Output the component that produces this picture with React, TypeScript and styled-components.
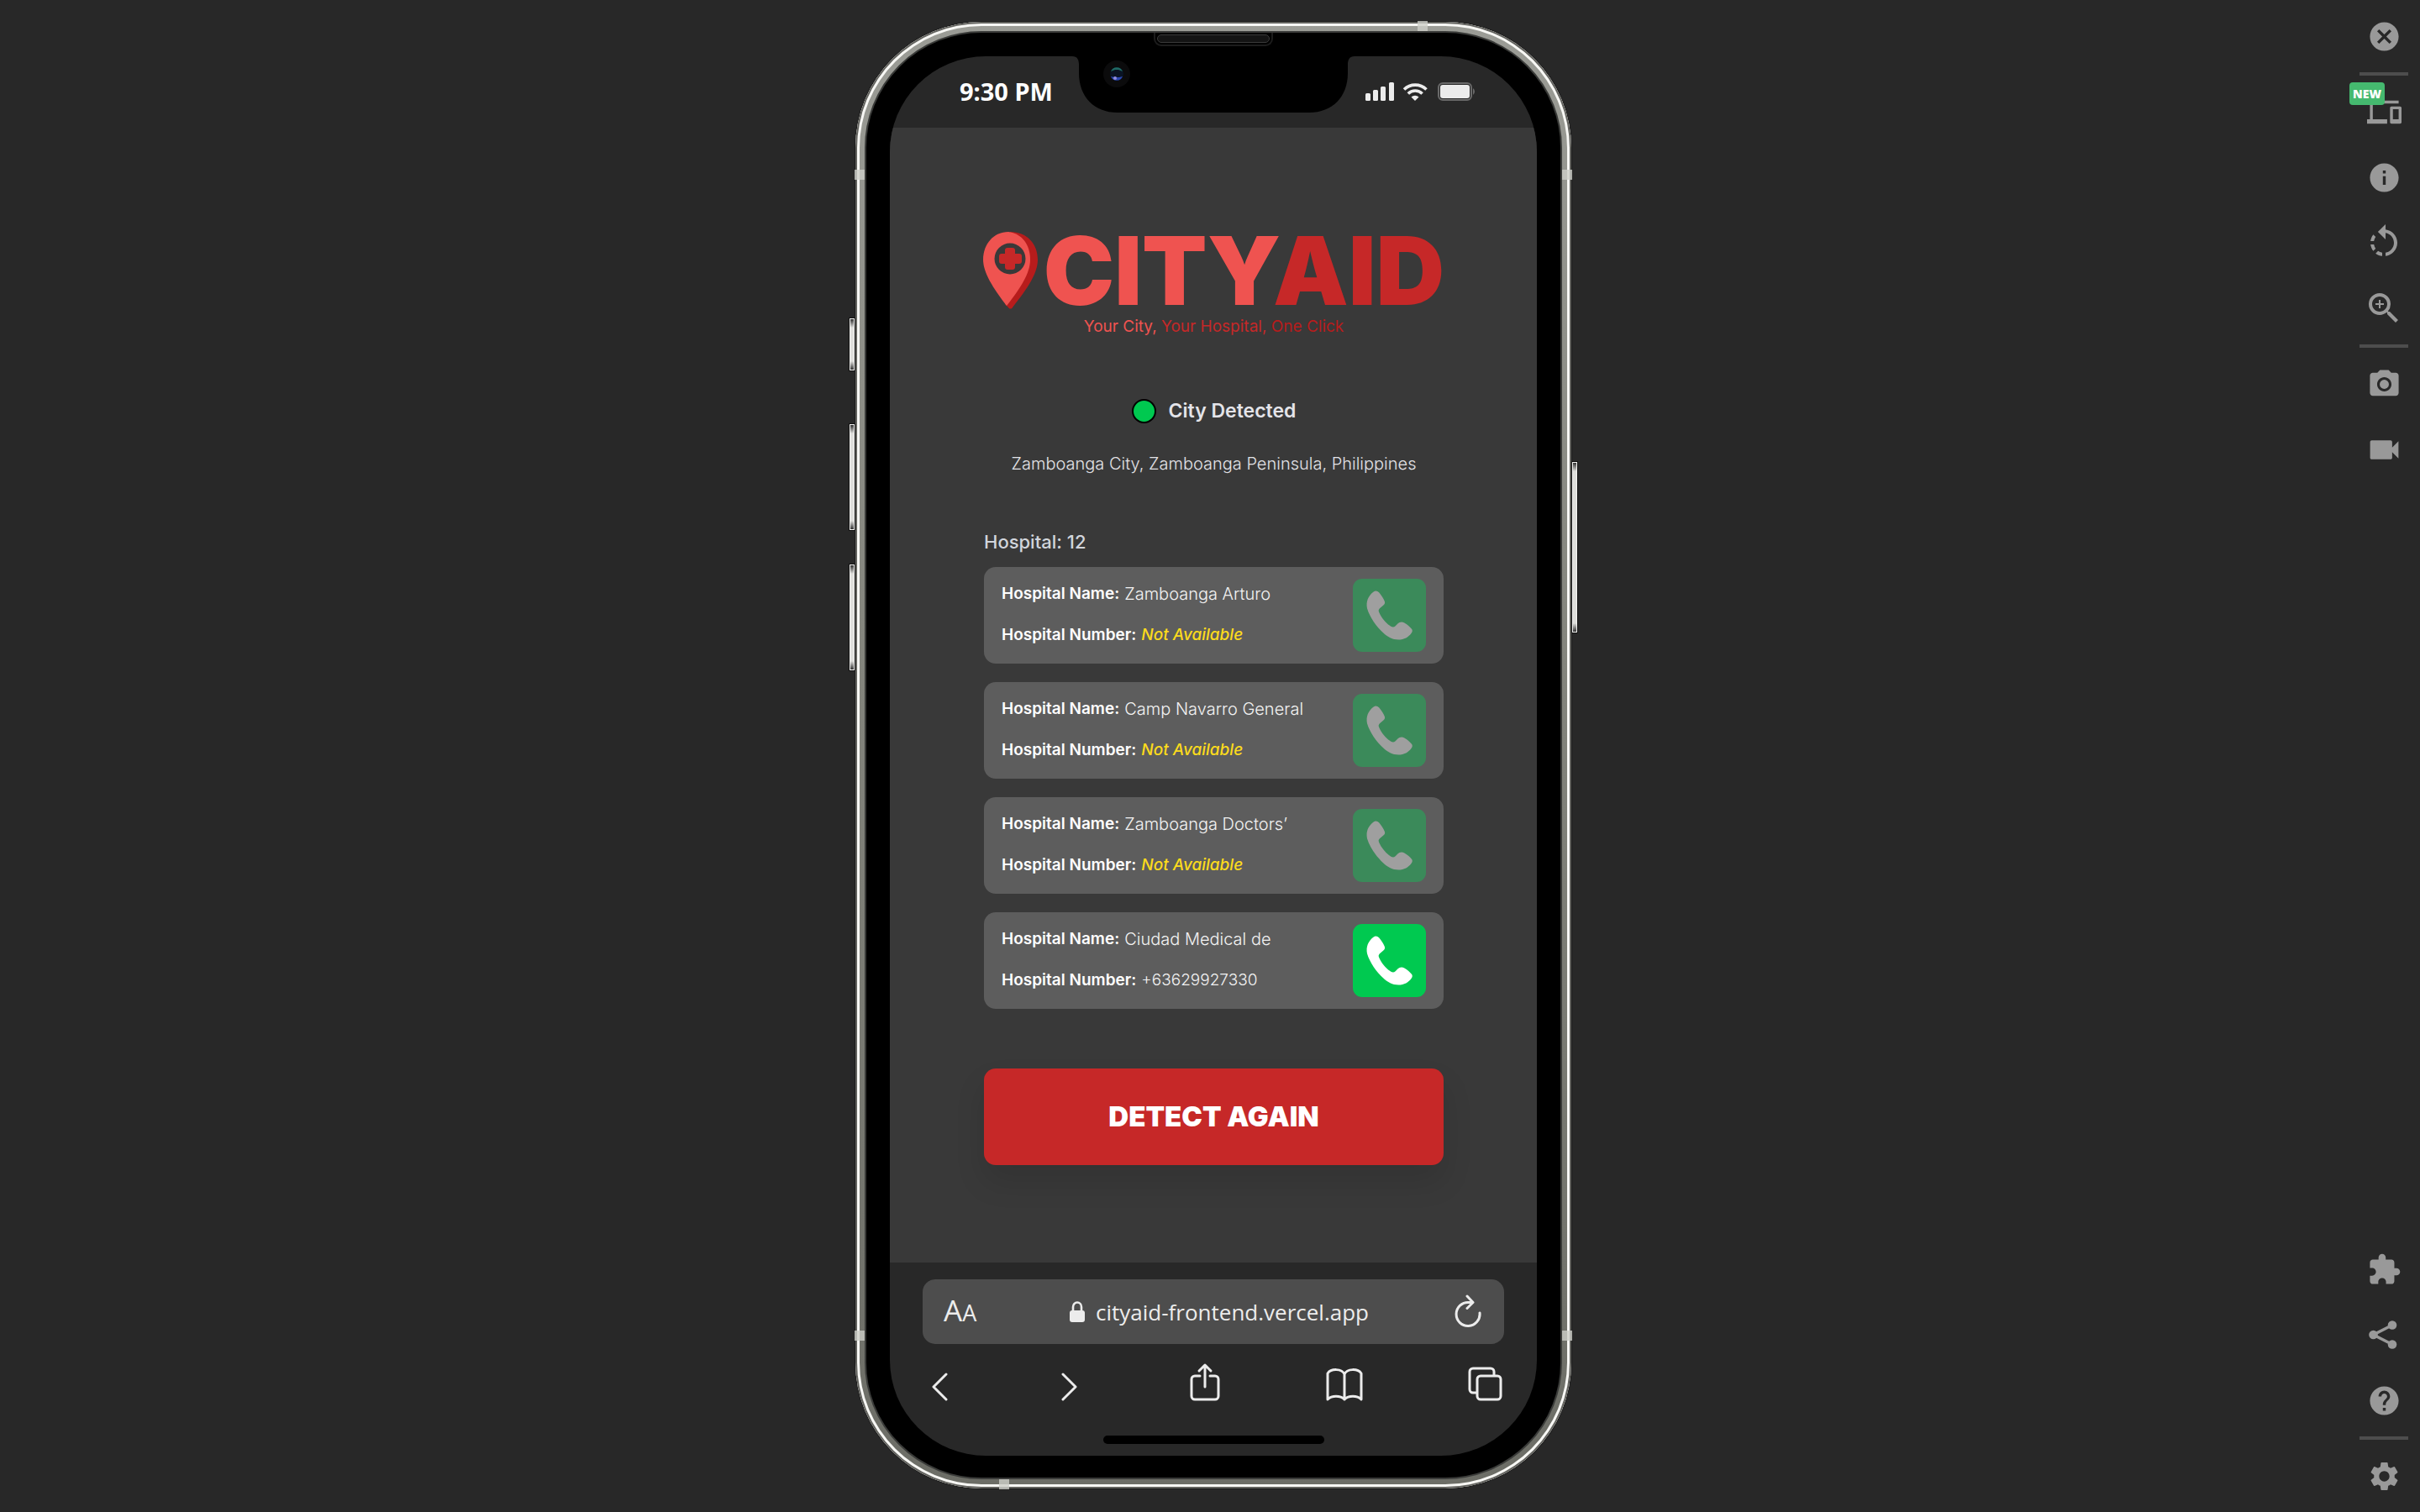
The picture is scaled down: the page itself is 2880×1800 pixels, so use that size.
import React from "react";
import styled, { createGlobalStyle } from "styled-components";
import {
  MdCameraAlt,
  MdCancel,
  MdDevices,
  MdExtension,
  MdHelp,
  MdInfo,
  MdRotateLeft,
  MdSettings,
  MdVideocam,
  MdZoomIn,
} from "react-icons/md";

const GlobalStyle = createGlobalStyle`
  *, *::before, *::after { box-sizing: border-box; }
  body {
    margin: 0;
    background: #282828;
    font-family: Inter, "Liberation Sans", sans-serif;
  }
  h1, h2, p, ul, dl, dd { margin: 0; padding: 0; }
  button { border: 0; padding: 0; background: none; color: inherit; font: inherit; cursor: pointer; }
`;

const systemFont = `"Open Sans", "Noto Sans", sans-serif`;

/* ---------- Workspace ---------- */

const Workspace = styled.div`
  display: grid;
  grid-template-columns: 94px 1fr 86px;
  min-height: 100vh;
`;

const Stage = styled.main`
  grid-column: 2;
  display: flex;
  justify-content: center;
  align-items: flex-start;
  padding: 26px 0;
`;

const Sidebar = styled.aside`
  display: flex;
  flex-direction: column;
  justify-content: space-between;
  padding: 4px 0;
`;

const ToolGroup = styled.div`
  display: flex;
  flex-direction: column;
`;

const ToolButton = styled.button<{ $size?: number }>`
  position: relative;
  display: flex;
  align-items: center;
  justify-content: center;
  width: 100%;
  height: 78px;
  color: #999999;

  svg {
    width: ${({ $size = 41 }) => $size}px;
    height: ${({ $size = 41 }) => $size}px;
  }
`;

const Divider = styled.hr`
  width: 58px;
  height: 4px;
  margin: 4px auto;
  border: 0;
  background: #4d4d4d;
`;

const NewBadge = styled.span`
  position: absolute;
  top: 4px;
  left: 2px;
  width: 42px;
  border-radius: 4px;
  background: #45b96f;
  color: #ffffff;
  font: 800 14px/27px "Open Sans", sans-serif;
  text-align: center;
`;

/* ---------- Phone ---------- */

const PhoneBody = styled.div`
  position: relative;
  width: 852px;
  padding: 11px;
  border-radius: 150px;
  background: linear-gradient(#9b9c96, #85867e 40%, #6c6d66);
  box-shadow: 0 0 0 1px #1a1a1a, inset 0 0 0 2px #62625e, inset 0 0 0 5px #f7f7f4;
`;

const Bezel = styled.div`
  position: relative;
  padding: 28px 28px 26px;
  border: 2px solid #3a3b39;
  border-radius: 139px;
  background: #000000;
`;

const Screen = styled.div`
  position: relative;
  display: flex;
  flex-direction: column;
  overflow: hidden;
  border-radius: 114px;
  background: #282828;
`;

const SideKey = styled.span<{ $side: "left" | "right"; $top: number; $length: number }>`
  position: absolute;
  top: ${({ $top }) => $top}px;
  ${({ $side }) => $side}: -7px;
  width: 6px;
  height: ${({ $length }) => $length}px;
  border: 1px solid #f4f4f2;
  background: linear-gradient(#333, #dededb 10px, #dededb calc(100% - 10px), #333);
  box-shadow: 0 0 0 1px #111111;
`;

const SideBand = styled.span<{ $side: "left" | "right"; $at: "top" | "bottom" }>`
  position: absolute;
  ${({ $side }) => $side}: -1px;
  ${({ $at }) => $at}: 176px;
  width: 12px;
  height: 12px;
  background: rgba(205, 206, 200, 0.8);
`;

const EdgeBand = styled.span<{ $edge: "top" | "bottom" }>`
  position: absolute;
  ${({ $edge }) => $edge}: -1px;
  ${({ $edge }) => ($edge === "top" ? "right" : "left")}: 171px;
  width: 12px;
  height: 12px;
  background: rgba(205, 206, 200, 0.8);
`;

const Speaker = styled.span`
  position: absolute;
  top: 0;
  left: 50%;
  width: 142px;
  height: 16px;
  margin-left: -71px;
  border: 2px solid #1c1c1c;
  border-top: 0;
  border-radius: 0 0 9px 9px;

  &::after {
    content: "";
    position: absolute;
    inset: 2px 2px 2px;
    border: 1px solid #3a3a3a;
    border-radius: 6px;
    background: #141414;
  }
`;

const NotchShape = styled.svg`
  position: absolute;
  top: 0;
  left: 50%;
  width: 336px;
  height: 68px;
  margin-left: -168px;
`;

const StatusBar = styled.header`
  display: flex;
  align-items: center;
  justify-content: space-between;
  height: 85px;
  padding: 0 72px 2px 83px;
  color: #ffffff;
  font: 700 29px/32px "Noto Sans", sans-serif;
`;

const StatusIcons = styled.svg`
  width: 132px;
  height: 24px;
`;

/* ---------- CityAid page ---------- */

const Page = styled.section`
  display: flex;
  flex-direction: column;
  padding: 124px 111px 116px 112px;
  background: #393939;
`;

const Brand = styled.h1`
  display: flex;
  align-items: center;
  align-self: center;
  gap: 7px;
  height: 92px;
  color: #ef5350;
  font-size: 113px;
  font-weight: 900;
  line-height: 90px;
  white-space: nowrap;

  svg {
    width: 65px;
    height: 92px;
  }
`;

const Deep = styled.span`
  color: #c62828;
`;

const Darkest = styled.span`
  color: #b71c1c;
`;

const Tagline = styled.p`
  margin-top: 7px;
  color: #ef5350;
  font-size: 19px;
  line-height: 28px;
  text-align: center;
`;

const DetectionStatus = styled.p`
  display: flex;
  align-items: center;
  justify-content: center;
  gap: 15px;
  margin-top: 70px;
  color: #e4e4e9;
  font-size: 23px;
  font-weight: 600;
  line-height: 32px;
`;

const StatusDot = styled.span`
  width: 29px;
  height: 29px;
  border: 2px solid #000000;
  border-radius: 50%;
  background: #00c950;
`;

const Location = styled.p`
  margin-top: 33px;
  color: #e2e2e6;
  font-size: 20px;
  font-weight: 300;
  line-height: 28px;
  text-align: center;
`;

const ListHeading = styled.h2`
  margin-top: 63px;
  color: #d1d5dc;
  font-size: 22px;
  font-weight: 500;
  line-height: 32px;
`;

const HospitalList = styled.ul`
  display: flex;
  flex-direction: column;
  gap: 22px;
  margin-top: 14px;
  list-style: none;
`;

const HospitalCard = styled.li`
  display: flex;
  align-items: center;
  justify-content: space-between;
  height: 115px;
  padding: 0 21px;
  border-radius: 14px;
  background: #5d5d5d;
`;

const Details = styled.dl`
  display: flex;
  flex-direction: column;
  gap: 21px;
  padding-bottom: 2px;
  color: #f2f2f2;
  font-size: 19px;
  line-height: 28px;
`;

const Detail = styled.div`
  display: flex;
  gap: 6px;
`;

const Label = styled.dt`
  color: #ffffff;
  font-weight: 600;
`;

const Value = styled.dd<{ $large?: boolean }>`
  font-size: ${({ $large }) => ($large ? 20 : 19)}px;
  font-weight: 300;
`;

const Missing = styled.em`
  color: #fcdb1c;
  font-weight: 500;
`;

const CallButton = styled.button`
  width: 87px;
  height: 87px;
  border-radius: 11px;
  background: #00c950;
  color: #ffffff;

  &:disabled {
    background: #3b8a5a;
    color: #9f9f9f;
  }

  svg {
    display: block;
    width: 100%;
    height: 100%;
  }
`;

const DetectButton = styled.button`
  height: 115px;
  margin-top: 71px;
  padding-bottom: 2px;
  border-radius: 14px;
  background: #c62828;
  box-shadow: 0 20px 36px rgba(0, 0, 0, 0.11);
  color: #ffffff;
  font-size: 33px;
  font-weight: 900;
`;

/* ---------- Browser chrome ---------- */

const BrowserBar = styled.footer`
  display: flex;
  flex-direction: column;
  height: 230px;
  padding: 20px 39px 14px;
  color: #ececec;
`;

const AddressBar = styled.div`
  display: flex;
  align-items: center;
  justify-content: space-between;
  height: 78px;
  padding: 0 27px 0 25px;
  border-radius: 15px;
  background: #4d4d4d;
`;

const TextSizeButton = styled.button`
  min-width: 48px;
  font: 400 35px/40px ${systemFont};
  text-align: left;

  small {
    font-size: 27px;
  }
`;

const AddressField = styled.label`
  display: flex;
  align-items: center;
  gap: 13px;
`;

const AddressInput = styled.input`
  field-sizing: content;
  padding: 0;
  border: 0;
  outline: 0;
  background: none;
  color: #ececec;
  font: 400 26px/36px ${systemFont};
`;

const ReloadButton = styled.button`
  display: flex;
`;

const NavRow = styled.nav`
  display: flex;
  align-items: flex-end;
  justify-content: space-between;
  height: 46px;
  margin-top: 22px;
  padding: 0 2px 0 11px;

  button {
    display: flex;
    min-width: 28px;
  }
`;

const HomeIndicator = styled.span`
  align-self: center;
  width: 263px;
  height: 10px;
  margin-top: 41px;
  border-radius: 5px;
  background: #000000;
`;

/* ---------- Drawings ---------- */

const line = {
  fill: "none",
  stroke: "currentColor",
  strokeWidth: 3,
  strokeLinecap: "round" as const,
  strokeLinejoin: "round" as const,
};

const PinLogo = () => (
  <svg viewBox="0 0 65 92" aria-hidden="true">
    <path
      fill="#b71c1c"
      d="M32 0C52 0 65 14 65 33c0 16-11 33-30 57-1 2-4 2-5 0l-4-4Z"
    />
    <path
      fill="#ef5350"
      d="M30 0C46 2 56 15 56 33c0 16-11 33-28 55C11 66 0 48 0 33 0 14 13 0 30 0Z"
    />
    <circle cx="32" cy="32" r="18.500" fill="#393939" />
    <path
      fill="#c62828"
      d="M29 19h6a3 3 0 0 1 3 3v4h5a3 3 0 0 1 3 3v6a3 3 0 0 1-3 3h-5v4a3 3 0 0 1-3 3h-6a3 3 0 0 1-3-3v-4h-4a3 3 0 0 1-3-3v-6a3 3 0 0 1 3-3h4v-4a3 3 0 0 1 3-3Z"
    />
  </svg>
);

const Handset = () => (
  <svg viewBox="30 29 261 260" aria-hidden="true">
    <path
      fill="currentColor"
      d="M104 75C110 70 118 71 124 78C132 88 139 98 143 108C146 115 144 119 139 123L126 134C121 139 121 143 124 149C132 167 147 185 162 196C170 202 176 202 182 197L190 189C197 182 206 181 214 186C224 192 233 199 240 208C243 212 243 217 240 221C229 237 213 246 193 246C171 246 154 236 139 222C114 199 90 165 81 134C76 110 85 89 104 75Z"
    />
  </svg>
);

const ShareNodes = () => (
  <svg viewBox="0 0 48 48" aria-hidden="true">
    <path d="M34 12.500 11.500 24 34 35.500" fill="none" stroke="currentColor" strokeWidth="3.500" />
    <circle cx="34" cy="12.500" r="5.300" fill="currentColor" />
    <circle cx="11.500" cy="24" r="5.300" fill="currentColor" />
    <circle cx="34" cy="35.500" r="5.300" fill="currentColor" />
  </svg>
);

const Notch = () => (
  <NotchShape viewBox="0 0 336 68" aria-hidden="true">
    <path d="M0 0h336c-6 0-8 4-8 10v10c0 28-18 47-46 47H54C26 67 8 48 8 20V10C8 4 6 0 0 0Z" />
    <circle cx="53" cy="21" r="16" fill="#0b0b0c" />
    <circle cx="53" cy="21" r="8" fill="#0a1424" />
    <path d="M46 18a7.500 7.500 0 0 1 14 0l-5-2h-4Z" fill="#1f6a64" />
    <path d="M46 24a7.500 7.500 0 0 0 14 0l-4 1h-6Z" fill="#2c46b0" />
    <circle cx="51" cy="26" r="2" fill="#8f8be0" />
  </NotchShape>
);

const StatusGlyphs = () => (
  <StatusIcons viewBox="0 0 132 24" role="img" aria-label="Signal, Wi-Fi and battery">
    <g fill="#ececec">
      <rect x="0" y="14" width="6" height="9" rx="1.500" />
      <rect x="9" y="10" width="6" height="13" rx="1.500" />
      <rect x="18" y="6" width="6" height="17" rx="1.500" />
      <rect x="28" y="1" width="6" height="22" rx="1.500" />
      <path d="M59 23l-4.500-4.500a6.500 6.500 0 0 1 9 0Z" />
      <rect x="89" y="4" width="35" height="16" rx="3" />
    </g>
    <g fill="none" stroke="#ececec" strokeWidth="3.600">
      <path d="M46 9.500a19 19 0 0 1 26.500 0" />
      <path d="M50.800 14.500a12 12 0 0 1 16.800 0" />
    </g>
    <rect x="87" y="2" width="39" height="20" rx="5" fill="none" stroke="#6a6a6a" strokeWidth="2" />
    <path d="M128 8a5 5 0 0 1 0 8Z" fill="#6a6a6a" />
  </StatusIcons>
);

const LockIcon = () => (
  <svg width="18" height="26" viewBox="0 0 18 26" aria-hidden="true">
    <rect x="0" y="11" width="18" height="14" rx="3" fill="currentColor" />
    <path d="M4 12V7a5 5.500 0 0 1 10 0v5" fill="none" stroke="currentColor" strokeWidth="2.600" />
  </svg>
);

const ReloadIcon = () => (
  <svg width="32" height="42" viewBox="0 0 32 42" aria-hidden="true">
    <path {...line} d="M21 9.500h-4A14 14 0 1 0 30 22" />
    <path {...line} d="M15 2l7 7.500-7 7" />
  </svg>
);

const BackIcon = () => (
  <svg width="19" height="34" viewBox="0 0 19 34" aria-hidden="true">
    <path {...line} d="M17 2L2 17l15 15" />
  </svg>
);

const ForwardIcon = () => (
  <svg width="19" height="34" viewBox="0 0 19 34" aria-hidden="true">
    <path {...line} d="M2 2l15 15L2 32" />
  </svg>
);

const ShareIcon = () => (
  <svg width="36" height="46" viewBox="0 0 36 46" aria-hidden="true">
    <path {...line} d="M12 16H6a4 4 0 0 0-4 4v20a4 4 0 0 0 4 4h24a4 4 0 0 0 4-4V20a4 4 0 0 0-4-4h-6" />
    <path {...line} d="M18 29V3M11 10l7-7 7 7" />
  </svg>
);

const BookIcon = () => (
  <svg width="44" height="40" viewBox="0 0 44 40" aria-hidden="true">
    <path {...line} d="M22 8C19 1 6 1 2 7v31c5-5 15-5 20 0 5-5 15-5 20 0V7C38 1 25 1 22 8Zm0 0v30" />
  </svg>
);

const TabsIcon = () => (
  <svg width="41" height="41" viewBox="0 0 41 41" aria-hidden="true">
    <path {...line} d="M10 31H6a4 4 0 0 1-4-4V6a4 4 0 0 1 4-4h21a4 4 0 0 1 4 4v4" />
    <rect {...line} x="11" y="11" width="28" height="28" rx="4" />
  </svg>
);

/* ---------- Data ---------- */

const hospitals: { name: string; phone?: string }[] = [
  { name: "Zamboanga Arturo" },
  { name: "Camp Navarro General" },
  { name: "Zamboanga Doctors’" },
  { name: "Ciudad Medical de", phone: "+63629927330" },
];

export default function App() {
  return (
    <>
      <GlobalStyle />
      <Workspace>
        <Stage>
          <PhoneBody>
            <SideKey $side="left" $top={353} $length={62} />
            <SideKey $side="left" $top={479} $length={126} />
            <SideKey $side="left" $top={646} $length={126} />
            <SideKey $side="right" $top={524} $length={203} />
            <SideBand $side="left" $at="top" />
            <SideBand $side="left" $at="bottom" />
            <SideBand $side="right" $at="top" />
            <SideBand $side="right" $at="bottom" />
            <EdgeBand $edge="top" />
            <EdgeBand $edge="bottom" />
            <Bezel>
              <Speaker />
              <Screen>
                <Notch />
                <StatusBar>
                  <time>9:30 PM</time>
                  <StatusGlyphs />
                </StatusBar>

                <Page>
                  <Brand>
                    <PinLogo />
                    <span>
                      CITY<Deep>AID</Deep>
                    </span>
                  </Brand>
                  <Tagline>
                    Your City, <Deep>Your Hospital,</Deep> <Darkest>One Click</Darkest>
                  </Tagline>
                  <DetectionStatus>
                    <StatusDot />
                    City Detected
                  </DetectionStatus>
                  <Location>Zamboanga City, Zamboanga Peninsula, Philippines</Location>

                  <ListHeading>Hospital: 12</ListHeading>
                  <HospitalList>
                    {hospitals.map(({ name, phone }) => (
                      <HospitalCard key={name}>
                        <Details>
                          <Detail>
                            <Label>Hospital Name:</Label>
                            <Value $large>{name}</Value>
                          </Detail>
                          <Detail>
                            <Label>Hospital Number:</Label>
                            <Value>{phone ?? <Missing>Not Available</Missing>}</Value>
                          </Detail>
                        </Details>
                        <CallButton disabled={!phone} aria-label={`Call ${name}`}>
                          <Handset />
                        </CallButton>
                      </HospitalCard>
                    ))}
                  </HospitalList>
                  <DetectButton>DETECT AGAIN</DetectButton>
                </Page>

                <BrowserBar>
                  <AddressBar>
                    <TextSizeButton aria-label="Text size">
                      A<small>A</small>
                    </TextSizeButton>
                    <AddressField>
                      <LockIcon />
                      <AddressInput
                        type="text"
                        aria-label="Address"
                        defaultValue="cityaid-frontend.vercel.app"
                      />
                    </AddressField>
                    <ReloadButton aria-label="Reload">
                      <ReloadIcon />
                    </ReloadButton>
                  </AddressBar>
                  <NavRow>
                    <button aria-label="Back"><BackIcon /></button>
                    <button aria-label="Forward"><ForwardIcon /></button>
                    <button aria-label="Share page"><ShareIcon /></button>
                    <button aria-label="Bookmarks"><BookIcon /></button>
                    <button aria-label="Tabs"><TabsIcon /></button>
                  </NavRow>
                  <HomeIndicator />
                </BrowserBar>
              </Screen>
            </Bezel>
          </PhoneBody>
        </Stage>

        <Sidebar>
          <ToolGroup>
            <ToolButton aria-label="Close"><MdCancel /></ToolButton>
            <Divider />
            <ToolButton aria-label="Devices">
              <MdDevices />
              <NewBadge>NEW</NewBadge>
            </ToolButton>
            <ToolButton aria-label="Information"><MdInfo /></ToolButton>
            <ToolButton $size={48} aria-label="Rotate"><MdRotateLeft /></ToolButton>
            <ToolButton $size={48} aria-label="Zoom in"><MdZoomIn /></ToolButton>
            <Divider />
            <ToolButton aria-label="Screenshot"><MdCameraAlt /></ToolButton>
            <ToolButton $size={45} aria-label="Record video"><MdVideocam /></ToolButton>
          </ToolGroup>
          <ToolGroup>
            <ToolButton aria-label="Extensions"><MdExtension /></ToolButton>
            <ToolButton $size={48} aria-label="Share"><ShareNodes /></ToolButton>
            <ToolButton aria-label="Help"><MdHelp /></ToolButton>
            <Divider />
            <ToolButton aria-label="Settings"><MdSettings /></ToolButton>
          </ToolGroup>
        </Sidebar>
      </Workspace>
    </>
  );
}
